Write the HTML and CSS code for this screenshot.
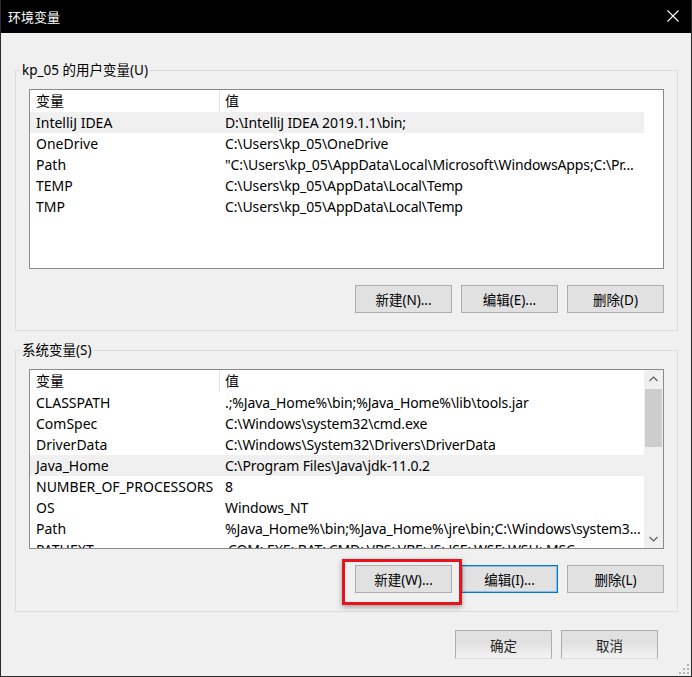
FILE: index.html
```html
<!DOCTYPE html>
<html lang="zh-CN">
<head>
    <meta charset="UTF-8">
    <meta name="viewport" content="width=device-width, initial-scale=1.0">
    <title>环境变量</title>
    <link rel="stylesheet" href="styles.css">
</head>
<body>

    <div class="window">
        <div class="titlebar">
            <span class="title">环境变量</span>
            <svg class="close" width="12" height="12" viewBox="0 0 12 12">
                <path d="M0.5 0.5 L11.5 11.5 M11.5 0.5 L0.5 11.5" stroke="#fff" stroke-width="1.1" fill="none"/>
            </svg>
        </div>

        <div class="content">
            <!-- User variables -->
            <fieldset class="group">
                <legend>kp_05 的用户变量(U)</legend>
                <div class="list">
                    <div class="rows">
                        <div class="row head"><span class="name">变量</span><span class="value">值</span></div>
                        <div class="row selected"><span class="name">IntelliJ IDEA</span><span class="value">D:\IntelliJ IDEA 2019.1.1\bin;</span></div>
                        <div class="row"><span class="name">OneDrive</span><span class="value">C:\Users\kp_05\OneDrive</span></div>
                        <div class="row"><span class="name">Path</span><span class="value">"C:\Users\kp_05\AppData\Local\Microsoft\WindowsApps;C:\Pr...</span></div>
                        <div class="row"><span class="name">TEMP</span><span class="value">C:\Users\kp_05\AppData\Local\Temp</span></div>
                        <div class="row"><span class="name">TMP</span><span class="value">C:\Users\kp_05\AppData\Local\Temp</span></div>
                    </div>
                </div>
                <div class="buttons">
                    <button>新建(N)...</button>
                    <button>编辑(E)...</button>
                    <button>删除(D)</button>
                </div>
            </fieldset>

            <!-- System variables -->
            <fieldset class="group system">
                <legend>系统变量(S)</legend>
                <div class="list">
                    <div class="rows">
                        <div class="row head"><span class="name">变量</span><span class="value">值</span></div>
                        <div class="row"><span class="name">CLASSPATH</span><span class="value">.;%Java_Home%\bin;%Java_Home%\lib\tools.jar</span></div>
                        <div class="row"><span class="name">ComSpec</span><span class="value">C:\Windows\system32\cmd.exe</span></div>
                        <div class="row"><span class="name">DriverData</span><span class="value">C:\Windows\System32\Drivers\DriverData</span></div>
                        <div class="row selected"><span class="name">Java_Home</span><span class="value">C:\Program Files\Java\jdk-11.0.2</span></div>
                        <div class="row"><span class="name">NUMBER_OF_PROCESSORS</span><span class="value">8</span></div>
                        <div class="row"><span class="name">OS</span><span class="value">Windows_NT</span></div>
                        <div class="row"><span class="name">Path</span><span class="value">%Java_Home%\bin;%Java_Home%\jre\bin;C:\Windows\system3...</span></div>
                        <div class="row"><span class="name">PATHEXT</span><span class="value">.COM;.EXE;.BAT;.CMD;.VBS;.VBE;.JS;.JSE;.WSF;.WSH;.MSC</span></div>
                    </div>
                    <div class="scrollbar">
                        <svg class="arrow" width="19" height="19" viewBox="0 0 19 19">
                            <path d="M5.5 11 L9.5 7 L13.5 11" stroke="#606060" stroke-width="1.2" fill="none"/>
                        </svg>
                        <div class="thumb"></div>
                        <div class="track"></div>
                        <svg class="arrow" width="19" height="19" viewBox="0 0 19 19">
                            <path d="M5.5 8 L9.5 12 L13.5 8" stroke="#606060" stroke-width="1.2" fill="none"/>
                        </svg>
                    </div>
                </div>
                <div class="buttons">
                    <span class="mark"><button>新建(W)...</button></span>
                    <button class="focused">编辑(I)...</button>
                    <button>删除(L)</button>
                </div>
            </fieldset>

            <div class="buttons footer">
                <button>确定</button>
                <button>取消</button>
            </div>
        </div>

        <svg class="grip" width="12" height="12" viewBox="0 0 12 12">
            <rect x="9" y="1" width="2" height="2" fill="#b5b5b5"/>
            <rect x="5" y="5" width="2" height="2" fill="#b5b5b5"/>
            <rect x="9" y="5" width="2" height="2" fill="#b5b5b5"/>
            <rect x="1" y="9" width="2" height="2" fill="#b5b5b5"/>
            <rect x="5" y="9" width="2" height="2" fill="#b5b5b5"/>
            <rect x="9" y="9" width="2" height="2" fill="#b5b5b5"/>
        </svg>
    </div>

</body>
</html>
```

FILE: styles.css
```css
*,
*::before,
*::after {
    box-sizing: border-box;
}

body {
    margin: 0;
    background: #f0f0f0;
    font-family: "Noto Sans", "Noto Sans CJK SC", sans-serif;
    font-size: 14px;
    color: #000;
}

/* Dialog frame */
.window {
    position: relative;
    width: 692px;
    height: 677px;
    background: #f0f0f0;
    border: 1px solid #2b2b2b;
    border-top: 0;
}

.titlebar {
    height: 33px;
    background: #000;
    color: #fff;
    display: flex;
    align-items: center;
    justify-content: space-between;
    padding: 0 12px 0 7px;
}

.title {
    font-size: 13px;
    font-family: "Noto Sans CJK SC", sans-serif;
    margin-top: -1px;
}

.close {
    display: block;
    margin-top: -1px;
}

.content {
    padding: 28px 13px 0 14px;
}

/* Group boxes */
.group {
    margin: 0;
    min-width: 0;
    border: 1px solid #dcdcdc;
    padding: 9px 13px 17px 13px;
}

.group.system {
    margin-top: 10px;
    padding-bottom: 18px;
}

.group legend {
    height: 19px;
    line-height: 19px;
    padding: 0 2px;
    margin-left: -9px;
    font-size: 13.5px;
}

/* List views */
.list {
    display: flex;
    width: 635px;
    height: 180px;
    background: #fff;
    border: 1px solid #8a8a8a;
    overflow: hidden;
}

.rows {
    width: 614px;
    flex: none;
}

.row {
    display: grid;
    grid-template-columns: 190px 1fr;
    height: 21px;
    line-height: 21px;
    white-space: nowrap;
}

.row.head {
    height: 22px;
    line-height: 22px;
}

.row.head .name {
    border-right: 1px solid #e5e5e5;
}

.row .name {
    padding-left: 6px;
    overflow: hidden;
}

.row .value {
    padding-left: 5px;
    letter-spacing: -0.12px;
    overflow: hidden;
}

.row.selected {
    background: #f0f0f0;
}

.scrollbar {
    flex: 1;
    display: flex;
    flex-direction: column;
    background: #f0f0f0;
}

.arrow {
    display: block;
    flex: none;
}

.thumb {
    height: 58px;
    margin: 0 1px;
    background: #cdcdcd;
}

.track {
    flex: 1;
}

/* Buttons */
.buttons {
    display: flex;
    justify-content: flex-end;
    gap: 9px;
    margin-top: 16px;
}

button {
    width: 97px;
    height: 28px;
    padding: 0;
    background: #e1e1e1;
    border: 1px solid #adadad;
    font-family: "Noto Sans", "Noto Sans CJK SC", sans-serif;
    font-size: 13.5px;
    color: #000;
}

button.focused {
    border-color: #0078d7;
    box-shadow: inset 0 0 0 1px rgba(0, 120, 215, 0.35);
}

.footer {
    margin-top: 18px;
    padding-right: 20px;
}

.footer button {
    height: 29px;
    background: linear-gradient(#e1e1e1 45%, #f3f3f3);
    border-color: #adadad #adadad #dedede;
    color: #222;
}

/* Red annotation box round the new button */
.mark {
    position: relative;
    display: flex;
}

.mark::after {
    content: "";
    position: absolute;
    left: -13px;
    top: -6px;
    width: 120px;
    height: 46px;
    border: 3px solid #e8121b;
    box-shadow: 0 2px 5px rgba(0, 0, 0, 0.35);
    pointer-events: none;
}

.grip {
    position: absolute;
    right: 1px;
    bottom: 1px;
}
```
